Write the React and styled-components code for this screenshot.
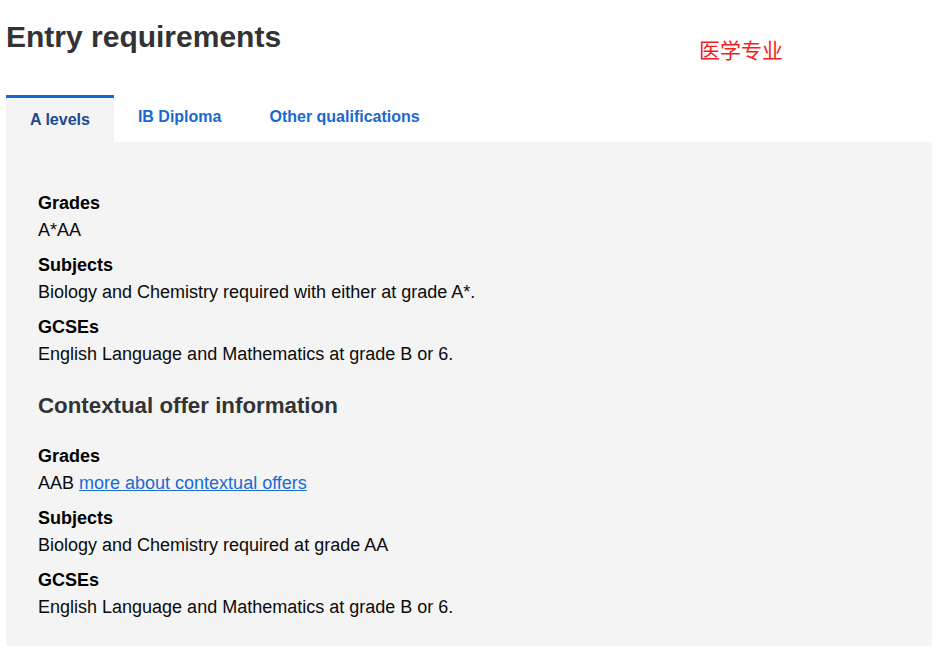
import React, { useState } from 'react'
import styled, { createGlobalStyle } from 'styled-components';

const GlobalStyle = createGlobalStyle`
    body {
        margin: 0;
        background: #fff;
        font-family: "Liberation Sans", Arial, sans-serif;
    }
`;

const Page = styled.div`
    padding: 20px 3px 20px 6px;
`;

const Header = styled.div`
    display: flex;
    align-items: flex-start;
`;

const Title = styled.h1`
    margin: 0;
    font-size: 30px;
    line-height: 34.5px;
    font-weight: 700;
    color: #333;
`;

const Tag = styled.span`
    margin: 13.5px 0 0 418px;
    font-family: "Noto Sans CJK SC", "Liberation Sans", sans-serif;
    font-size: 21px;
    line-height: 30px;
    color: #f01e1e;
`;

const TabBar = styled.div`
    display: flex;
    align-items: flex-start;
    margin-top: 31.5px;
`;

const Tab = styled.button`
    border: 0;
    border-top: ${props => props.active ? "3px solid #1668d1" : "0"};
    background: ${props => props.active ? "#f4f4f4" : "transparent"};
    color: ${props => props.active ? "#1b4a8d" : "#1a69d0"};
    font-family: inherit;
    font-size: 16px;
    font-weight: 700;
    line-height: 20px;
    padding: 12px 24px;
    cursor: pointer;
`;

const Panel = styled.div`
    background: #f4f4f4;
    padding: 47.5px 32px 17px;
`;

const Label = styled.div`
    font-size: 18px;
    line-height: 27px;
    font-weight: 700;
    color: #000;
`;

const Value = styled.div`
    font-size: 18px;
    line-height: 27px;
    color: #0b0b0b;
    margin-bottom: 8px;
    a {
        color: #1a6ad3;
        text-decoration: underline;
    }
`;

const SubHeading = styled.h2`
    margin: 24px 0 24px;
    font-size: 22.3px;
    line-height: 27px;
    font-weight: 700;
    color: #333;
`;

const tabs = ["A levels", "IB Diploma", "Other qualifications"];

function Requirement({ label, children }) {
    return (
        <>
            <Label>{label}</Label>
            <Value>{children}</Value>
        </>
    )
}

function App() {
    const [active, setActive] = useState(0);
    return (
        <Page>
            <GlobalStyle />
            <Header>
                <Title>Entry requirements</Title>
                <Tag>医学专业</Tag>
            </Header>
            <TabBar>
                {tabs.map((t, i) => (
                    <Tab key={t} active={i === active} onClick={() => setActive(i)}>{t}</Tab>
                ))}
            </TabBar>
            <Panel>
                <Requirement label="Grades">A*AA</Requirement>
                <Requirement label="Subjects">Biology and Chemistry required with either at grade A*.</Requirement>
                <Requirement label="GCSEs">English Language and Mathematics at grade B or 6.</Requirement>
                <SubHeading>Contextual offer information</SubHeading>
                <Requirement label="Grades">AAB <a href="#contextual">more about contextual offers</a></Requirement>
                <Requirement label="Subjects">Biology and Chemistry required at grade AA</Requirement>
                <Requirement label="GCSEs">English Language and Mathematics at grade B or 6.</Requirement>
            </Panel>
        </Page>
    )
}

export default App
